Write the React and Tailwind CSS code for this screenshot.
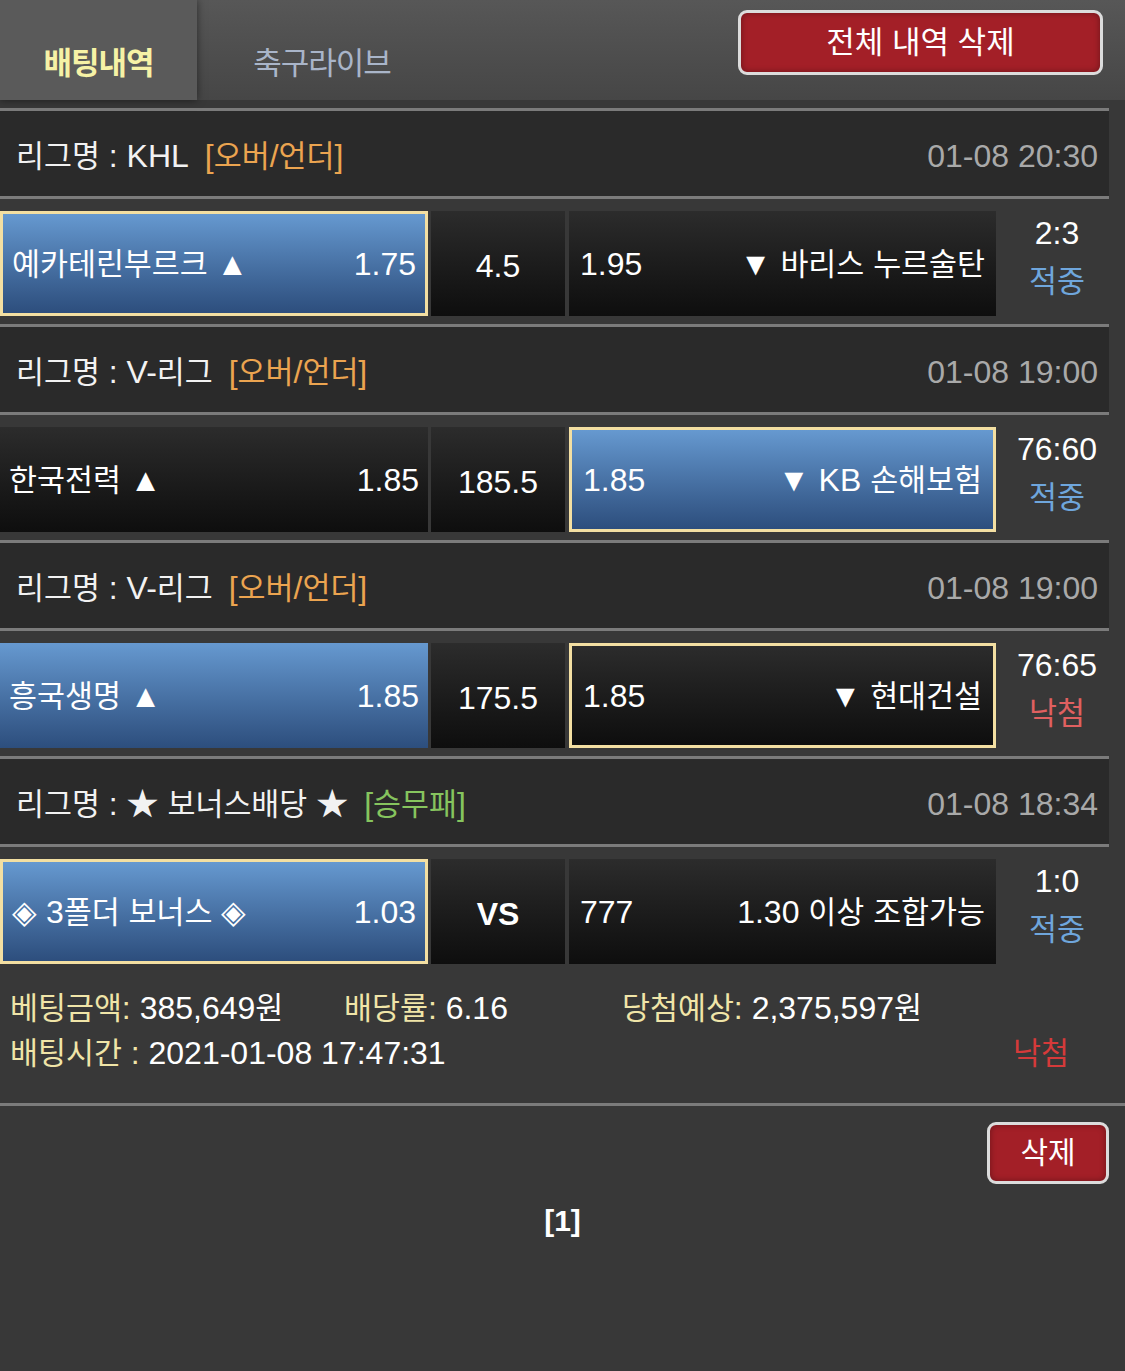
const GAMES = [
  {
    league: 'KHL', type: '[오버/언더]', typeColor: 'text-[#eba450]', date: '01-08 20:30',
    home: '예카테린부르크 ▲', homeOdd: '1.75', mid: '4.5', awayOdd: '1.95', away: '▼ 바리스 누르술탄',
    blue: 'home', picked: 'home', score: '2:3', result: '적중',
  },
  {
    league: 'V-리그', type: '[오버/언더]', typeColor: 'text-[#eba450]', date: '01-08 19:00',
    home: '한국전력 ▲', homeOdd: '1.85', mid: '185.5', awayOdd: '1.85', away: '▼ KB 손해보험',
    blue: 'away', picked: 'away', score: '76:60', result: '적중',
  },
  {
    league: 'V-리그', type: '[오버/언더]', typeColor: 'text-[#eba450]', date: '01-08 19:00',
    home: '흥국생명 ▲', homeOdd: '1.85', mid: '175.5', awayOdd: '1.85', away: '▼ 현대건설',
    blue: 'home', picked: 'away', score: '76:65', result: '낙첨',
  },
  {
    league: '★ 보너스배당 ★', type: '[승무패]', typeColor: 'text-[#86c45e]', date: '01-08 18:34',
    home: '◈ 3폴더 보너스 ◈', homeOdd: '1.03', mid: 'VS', midBold: true, awayOdd: '777', away: '1.30 이상 조합가능',
    blue: 'home', picked: 'home', score: '1:0', result: '적중',
  },
];

// hangul runs a bit smaller, like the narrow Korean face in the screenshot
function T({ children }) {
  const parts = String(children).split(/([\uAC00-\uD7A3]+)/);
  return parts.map((p, i) =>
    /[\uAC00-\uD7A3]/.test(p) ? (
      <span key={i} className="text-[0.95em]">{p}</span>
    ) : (
      p
    )
  );
}

function Line({ full }) {
  return <div className={`h-[3px] bg-[#7b7b7b] ${full ? '' : 'mr-[16px]'}`} />;
}

function Cell({ blue, picked, className, children }) {
  const bg = blue
    ? 'bg-gradient-to-b from-[#6699d0] to-[#2d4e7d]'
    : 'bg-gradient-to-b from-[#2c2c2c] to-[#0e0e0e]';
  const border = picked ? 'border-[3px] border-[#f3dfa2]' : '';
  return (
    <div className={`h-[105px] flex items-center text-white ${bg} ${border} ${className}`}>
      {children}
    </div>
  );
}

function Game({ g }) {
  return (
    <div>
      <Line />
      <div className="mr-[16px] h-[85px] bg-[#2a2a2a] flex items-center justify-between pl-[16px] pr-[11px] pt-[5px]">
        <div className="flex items-center gap-[16px]">
          <span className="text-[#f2f2f2]"><T>{'리그명 : ' + g.league}</T></span>
          <span className={g.typeColor}><T>{g.type}</T></span>
        </div>
        <span className="text-[#a9a9a9]">{g.date}</span>
      </div>
      <Line />
      <div className="h-[125px] flex pt-[12px]">
        <Cell blue={g.blue === 'home'} picked={g.picked === 'home'} className="w-[428px] justify-between px-[9px]">
          <span><T>{g.home}</T></span>
          <span>{g.homeOdd}</span>
        </Cell>
        <Cell className="w-[134px] ml-[3px] justify-center pt-[4px]">
          <span className={g.midBold ? 'font-bold' : ''}>{g.mid}</span>
        </Cell>
        <Cell blue={g.blue === 'away'} picked={g.picked === 'away'} className="w-[427px] ml-[4px] justify-between px-[11px]">
          <span>{g.awayOdd}</span>
          <span><T>{g.away}</T></span>
        </Cell>
        <div className="w-[122px] flex flex-col items-center -mt-[2px] leading-[48px]">
          <span className="text-white">{g.score}</span>
          <span className={g.result === '적중' ? 'text-[#6fa6dc]' : 'text-[#e06060]'}><T>{g.result}</T></span>
        </div>
      </div>
    </div>
  );
}

function RedButton({ className, children }) {
  return (
    <button className={`bg-[#a31f27] border-[3px] border-[#dcdcdc] rounded-[9px] text-white shadow-[inset_0_0_6px_rgba(0,0,0,0.35)] ${className}`}>
      {children}
    </button>
  );
}

export default function App() {
  return (
    <div className="w-[1125px] min-h-[1371px] bg-[#383838] font-['Liberation_Sans','Noto_Sans_CJK_KR',sans-serif] text-[32px] leading-[40px]">
      {/* Top tabs */}
      <div className="h-[100px] flex bg-gradient-to-b from-[#575757] to-[#464646]">
        <div className="w-[197px] h-full bg-[#5a5a5a] shadow-[0_0_8px_rgba(0,0,0,0.5)] flex justify-center pt-[44px]">
          <span className="font-bold text-[#f6f2a6] text-[31px] tracking-[-1px]">배팅내역</span>
        </div>
        <div className="w-[250px] flex justify-center pt-[44px]">
          <span className="text-[#a9b5c9] text-[31px] tracking-[-1px]">축구라이브</span>
        </div>
        <RedButton className="ml-auto mt-[10px] mr-[22px] w-[365px] h-[65px] text-[31px]">
          전체 내역 삭제
        </RedButton>
      </div>

      <div className="mt-[8px]">
        {GAMES.map((g, i) => (
          <Game key={i} g={g} />
        ))}
      </div>

      {/* Summary */}
      <div className="pt-[14px] pb-[27px] pl-[10px] leading-[45px]">
        <div className="flex">
          <div className="w-[334px]">
            <span className="text-[#f0e5a8]"><T>베팅금액:</T></span> <span className="text-white"><T>385,649원</T></span>
          </div>
          <div className="w-[278px]">
            <span className="text-[#f0e5a8]"><T>배당률:</T></span> <span className="text-white">6.16</span>
          </div>
          <div>
            <span className="text-[#f0e5a8]"><T>당첨예상:</T></span> <span className="text-white"><T>2,375,597원</T></span>
          </div>
        </div>
        <div className="flex justify-between pr-[56px]">
          <div>
            <span className="text-[#f0e5a8]"><T>배팅시간 :</T></span> <span className="text-white">2021-01-08 17:47:31</span>
          </div>
          <span className="text-[#d63a3a]"><T>낙첨</T></span>
        </div>
      </div>
      <Line full />

      <div className="flex justify-end pr-[16px] mt-[16px]">
        <RedButton className="w-[122px] h-[62px] text-[30px]">삭제</RedButton>
      </div>
      <div className="mt-[17px] text-center text-white font-bold text-[30px]">[1]</div>
    </div>
  );
}
